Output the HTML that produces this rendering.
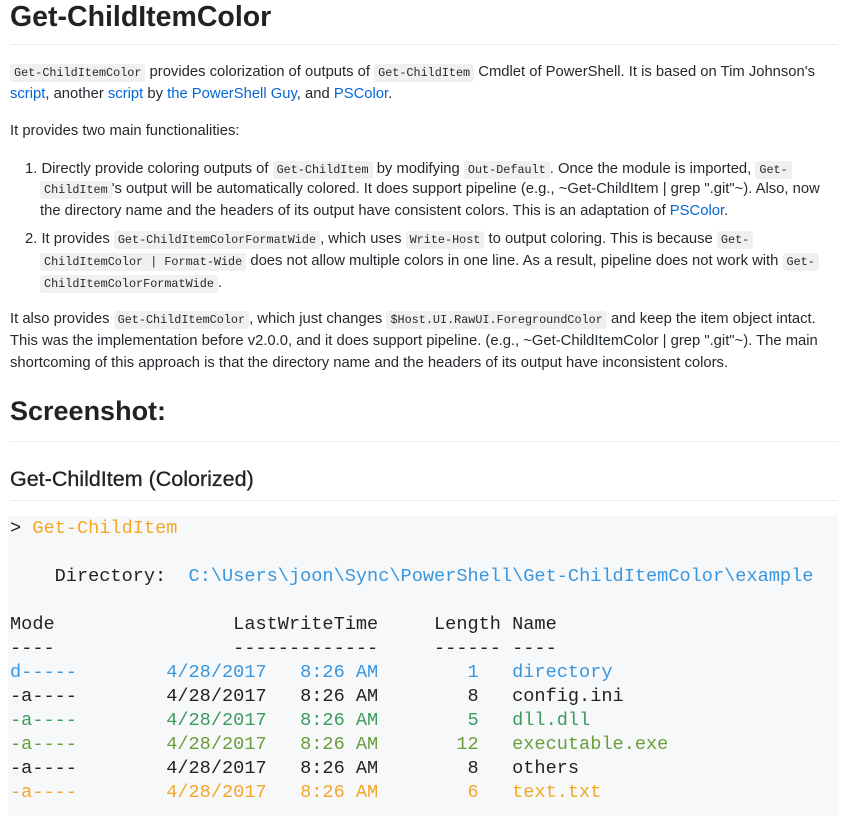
<!DOCTYPE html>
<html><head><meta charset="utf-8"><style>
body{margin:0;width:844px;height:827px;background:#fff;font-family:"Liberation Sans",sans-serif;color:#24292e;position:relative;overflow:hidden}
.l{position:absolute;white-space:nowrap;font-size:14.8px;line-height:20px}
code{font-family:"Liberation Mono",monospace;font-size:11.8px;background:#f0f0f0;padding:2px 4px;border-radius:3px}
a{color:#0366d6;text-decoration:none}
.hr{position:absolute;left:10px;width:828px;height:1px;background:#eaecef}
h1,h2,h3{margin:0;position:absolute;left:10px;font-weight:bold;white-space:nowrap}
.term{position:absolute;left:8px;top:516px;width:830px;height:300px;background:#f6f8fa}
pre{margin:0;position:absolute;left:10px;top:517px;font-family:"Liberation Mono",monospace;font-size:18.6px;line-height:24px;color:#222}
.o{color:#f5a623}.b{color:#3a96dd}.g{color:#3d9a5d}.lg{color:#6a9e3a}
</style></head><body>
<h1 style="top:1px;font-size:28.5px;color:#222">Get-ChildItemColor</h1>
<div class="hr" style="top:44px"></div>
<div class="l" style="left:10px;top:62px"><code>Get-ChildItemColor</code> provides colorization of outputs of <code>Get-ChildItem</code> Cmdlet of PowerShell. It is based on Tim Johnson's</div>
<div class="l" style="left:10px;top:84px"><a>script</a>, another <a>script</a> by <a>the PowerShell Guy</a>, and <a>PSColor</a>.</div>
<div class="l" style="left:10px;top:121px">It provides two main functionalities:</div>
<div class="l" style="left:25px;top:159px">1. Directly provide coloring outputs of <code>Get-ChildItem</code> by modifying <code>Out-Default</code>. Once the module is imported, <code>Get-</code></div>
<div class="l" style="left:40px;top:179px"><code>ChildItem</code>'s output will be automatically colored. It does support pipeline (e.g., ~Get-ChildItem | grep ".git"~). Also, now</div>
<div class="l" style="left:40px;top:201px">the directory name and the headers of its output have consistent colors. This is an adaptation of <a>PSColor</a>.</div>
<div class="l" style="left:25px;top:229px">2. It provides <code>Get-ChildItemColorFormatWide</code>, which uses <code>Write-Host</code> to output coloring. This is because <code>Get-</code></div>
<div class="l" style="left:40px;top:251px"><code>ChildItemColor | Format-Wide</code> does not allow multiple colors in one line. As a result, pipeline does not work with <code>Get-</code></div>
<div class="l" style="left:40px;top:273px"><code>ChildItemColorFormatWide</code>.</div>
<div class="l" style="left:10px;top:309px">It also provides <code>Get-ChildItemColor</code>, which just changes <code>$Host.UI.RawUI.ForegroundColor</code> and keep the item object intact.</div>
<div class="l" style="left:10px;top:331px">This was the implementation before v2.0.0, and it does support pipeline. (e.g., ~Get-ChildItemColor | grep ".git"~). The main</div>
<div class="l" style="left:10px;top:353px">shortcoming of this approach is that the directory name and the headers of its output have inconsistent colors.</div>
<h2 style="top:396px;font-size:27px;color:#222">Screenshot:</h2>
<div class="hr" style="top:441px"></div>
<h3 style="top:467px;font-size:21.5px;font-weight:normal;color:#222;-webkit-text-stroke:0.3px #222">Get-ChildItem (Colorized)</h3>
<div class="hr" style="top:500px"></div>
<div class="term"></div>
<pre>
&gt; <span class="o">Get-ChildItem</span>

    Directory:  <span class="b">C:\Users\joon\Sync\PowerShell\Get-ChildItemColor\example</span>

Mode                LastWriteTime     Length Name
----                -------------     ------ ----
<span class="b">d-----        4/28/2017   8:26 AM        1   directory</span>
-a----        4/28/2017   8:26 AM        8   config.ini
<span class="g">-a----        4/28/2017   8:26 AM        5   dll.dll</span>
<span class="lg">-a----        4/28/2017   8:26 AM       12   executable.exe</span>
-a----        4/28/2017   8:26 AM        8   others
<span class="o">-a----        4/28/2017   8:26 AM        6   text.txt</span>
</pre>
</body></html>
